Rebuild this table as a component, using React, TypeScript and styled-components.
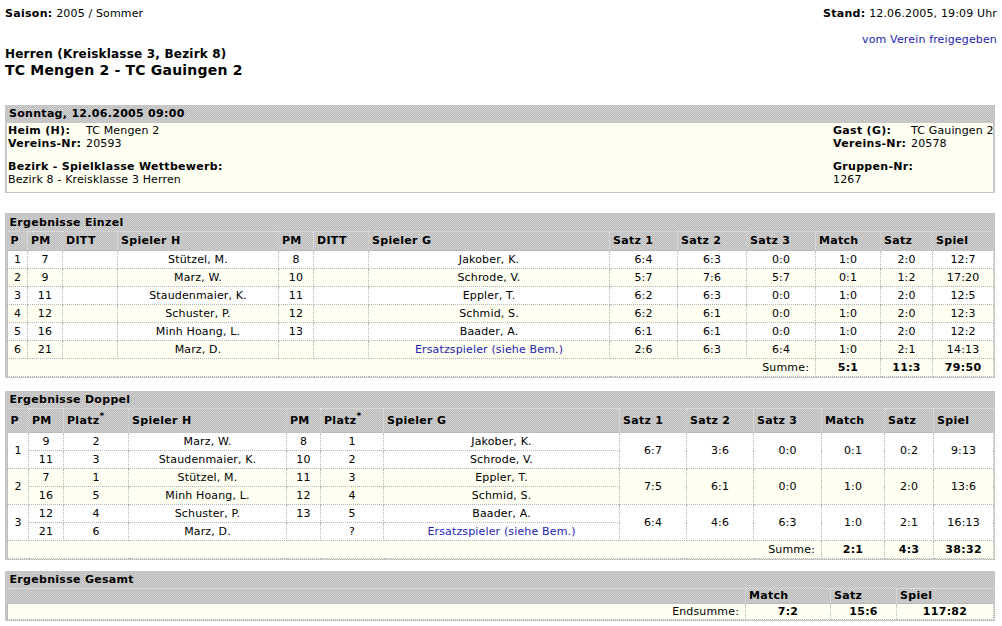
import React from "react";
import styled, { createGlobalStyle, css } from "styled-components";

const grayBg = css`
  background-color: #c6c6c6;
  background-image: repeating-conic-gradient(#bdbdbd 0% 25%, #d0d0d0 0% 50%);
  background-size: 2px 2px;
`;
const yellowBg = css`
  background-color: #fffff4;
  background-image: repeating-conic-gradient(#ffffe6 0% 25%, #ffffff 0% 50%);
  background-size: 2px 2px;
`;

const GlobalStyle = createGlobalStyle`
  html, body { margin: 0; padding: 0; background: #fff; }
  body {
    font-family: "DejaVu Sans", Verdana, "Liberation Sans", sans-serif;
    font-size: 11px;
    letter-spacing: 0.15px;
    color: #000;
  }
  b, th { letter-spacing: 0.3px; }
`;

const Page = styled.div`
  padding: 7px 5px 10px 5px;
`;

const TopBar = styled.div`
  display: flex;
  justify-content: space-between;
  line-height: 14px;
`;

const B = styled.b`
  font-weight: bold;
`;

const LinkRow = styled.div`
  margin-top: 12px;
  text-align: right;
  line-height: 14px;
  color: #2424b0;
`;

const League = styled.div`
  font-weight: bold;
  font-size: 12px;
  line-height: 15px;
  letter-spacing: 0.2px;
`;

const MatchTitle = styled.div`
  font-weight: bold;
  font-size: 14px;
  line-height: 17px;
  letter-spacing: 0.2px;
`;

const Box = styled.div<{ $mt: number }>`
  margin: ${(p) => p.$mt}px 2px 0 0;
  padding: 1px 2px 1px 2px;
  ${grayBg};
`;

const BoxHead = styled.div`
  font-weight: bold;
  letter-spacing: 0.3px;
  line-height: 16px;
  padding-left: 2px;
`;

const InfoBody = styled.div`
  ${yellowBg};
  display: grid;
  grid-template-columns: 825px 1fr;
  padding: 1px 0 6px 1px;
  margin-top: 1px;
  white-space: nowrap;
`;

const InfoCol = styled.div`
  display: flex;
  flex-direction: column;
`;

const FieldGrid = styled.div`
  display: grid;
  grid-template-columns: 78px auto;
  line-height: 13px;
`;

const Block = styled.div`
  margin-top: 10px;
  line-height: 13px;
`;

const Table = styled.table`
  width: 100%;
  border-collapse: collapse;
  table-layout: fixed;
  white-space: nowrap;
`;

const TitleCell = styled.th<{ $h: number }>`
  text-align: left;
  font-weight: bold;
  height: ${(p) => p.$h}px;
  padding: 0 2px;
  line-height: 14px;
  border-bottom: 1px dotted #e4e4e4;
`;

const HeadCell = styled.th<{ $h: number }>`
  text-align: left;
  font-weight: bold;
  height: ${(p) => p.$h}px;
  padding: 0 3px;
  line-height: 14px;
  border-left: 1px dotted #e0e0e0;
  &:first-child {
    border-left: none;
  }
`;

const Row = styled.tr<{ $alt: boolean }>`
  ${(p) => (p.$alt ? yellowBg : css`background: #fff;`)};
`;

const Cell = styled.td<{ $h?: number; $bold?: boolean; $link?: boolean }>`
  height: ${(p) => p.$h ?? 17}px;
  padding: 0 3px;
  line-height: 14px;
  text-align: center;
  font-weight: ${(p) => (p.$bold ? "bold" : "normal")};
  letter-spacing: ${(p) => (p.$bold ? "0.3px" : "0.15px")};
  color: ${(p) => (p.$link ? "#2424b0" : "#000")};
  border: 1px dotted #b4b4b4;
  overflow: visible;
`;

const SumLabel = styled(Cell)`
  text-align: right;
  padding-right: 6px;
`;

const Sup = styled.sup`
  font-size: 9px;
  line-height: 0;
`;

const einzelCols = [20, 35, 55, 161, 35, 55, 241, 68, 69, 69, 65, 52, 61];
const einzelHead = ["P", "PM", "DITT", "Spieler H", "PM", "DITT", "Spieler G", "Satz 1", "Satz 2", "Satz 3", "Match", "Satz", "Spiel"];
const einzelRows: (string | number)[][] = [
  [1, 7, "", "Stützel, M.", 8, "", "Jakober, K.", "6:4", "6:3", "0:0", "1:0", "2:0", "12:7"],
  [2, 9, "", "Marz, W.", 10, "", "Schrode, V.", "5:7", "7:6", "5:7", "0:1", "1:2", "17:20"],
  [3, 11, "", "Staudenmaier, K.", 11, "", "Eppler, T.", "6:2", "6:3", "0:0", "1:0", "2:0", "12:5"],
  [4, 12, "", "Schuster, P.", 12, "", "Schmid, S.", "6:2", "6:1", "0:0", "1:0", "2:0", "12:3"],
  [5, 16, "", "Minh Hoang, L.", 13, "", "Baader, A.", "6:1", "6:1", "0:0", "1:0", "2:0", "12:2"],
  [6, 21, "", "Marz, D.", "", "", "Ersatzspieler (siehe Bem.)", "2:6", "6:3", "6:4", "1:0", "2:1", "14:13"],
];

const doppelCols = [21, 35, 65, 158, 34, 63, 236, 67, 67, 68, 63, 49, 60];
const doppelHead: React.ReactNode[] = [
  "P", "PM", <>Platz<Sup>*</Sup></>, "Spieler H", "PM", <>Platz<Sup>*</Sup></>, "Spieler G",
  "Satz 1", "Satz 2", "Satz 3", "Match", "Satz", "Spiel",
];
const doppelGroups = [
  {
    p: 1,
    a: [9, 2, "Marz, W.", 8, 1, "Jakober, K."],
    b: [11, 3, "Staudenmaier, K.", 10, 2, "Schrode, V."],
    s: ["6:7", "3:6", "0:0", "0:1", "0:2", "9:13"],
  },
  {
    p: 2,
    a: [7, 1, "Stützel, M.", 11, 3, "Eppler, T."],
    b: [16, 5, "Minh Hoang, L.", 12, 4, "Schmid, S."],
    s: ["7:5", "6:1", "0:0", "1:0", "2:0", "13:6"],
  },
  {
    p: 3,
    a: [12, 4, "Schuster, P.", 13, 5, "Baader, A."],
    b: [21, 6, "Marz, D.", "", "?", "Ersatzspieler (siehe Bem.)"],
    s: ["6:4", "4:6", "6:3", "1:0", "2:1", "16:13"],
  },
];

const Cols = ({ widths }: { widths: number[] }) => (
  <colgroup>
    {widths.map((w, i) => (
      <col key={i} style={{ width: w }} />
    ))}
  </colgroup>
);

const isLink = (v: string | number) => v === "Ersatzspieler (siehe Bem.)";

const Einzel = () => (
  <Box $mt={20}>
    <Table>
      <Cols widths={einzelCols} />
      <thead>
        <tr>
          <TitleCell $h={17} colSpan={13}>Ergebnisse Einzel</TitleCell>
        </tr>
        <tr>
          {einzelHead.map((h, i) => (
            <HeadCell $h={18} key={i}>{h}</HeadCell>
          ))}
        </tr>
      </thead>
      <tbody>
        {einzelRows.map((r, i) => (
          <Row $alt={i % 2 === 1} key={i}>
            {r.map((v, j) => (
              <Cell key={j} $link={isLink(v)}>{v}</Cell>
            ))}
          </Row>
        ))}
        <Row $alt={true}>
          <SumLabel colSpan={10}>Summe:</SumLabel>
          <Cell $bold>5:1</Cell>
          <Cell $bold>11:3</Cell>
          <Cell $bold>79:50</Cell>
        </Row>
      </tbody>
    </Table>
  </Box>
);

const Doppel = () => (
  <Box $mt={13}>
    <Table>
      <Cols widths={doppelCols} />
      <thead>
        <tr>
          <TitleCell $h={16} colSpan={13}>Ergebnisse Doppel</TitleCell>
        </tr>
        <tr>
          {doppelHead.map((h, i) => (
            <HeadCell $h={23} key={i}>{h}</HeadCell>
          ))}
        </tr>
      </thead>
      <tbody>
        {doppelGroups.map((g, i) => (
          <React.Fragment key={i}>
            <Row $alt={i % 2 === 1}>
              <Cell rowSpan={2}>{g.p}</Cell>
              {g.a.map((v, j) => (
                <Cell key={j} $link={isLink(v)}>{v}</Cell>
              ))}
              {g.s.map((v, j) => (
                <Cell key={"s" + j} rowSpan={2}>{v}</Cell>
              ))}
            </Row>
            <Row $alt={i % 2 === 1}>
              {g.b.map((v, j) => (
                <Cell key={j} $link={isLink(v)}>{v}</Cell>
              ))}
            </Row>
          </React.Fragment>
        ))}
        <Row $alt={true}>
          <SumLabel colSpan={10}>Summe:</SumLabel>
          <Cell $bold>2:1</Cell>
          <Cell $bold>4:3</Cell>
          <Cell $bold>38:32</Cell>
        </Row>
      </tbody>
    </Table>
  </Box>
);

const Gesamt = () => (
  <Box $mt={11}>
    <Table>
      <Cols widths={[738, 85, 66, 97]} />
      <thead>
        <tr>
          <TitleCell $h={16} colSpan={4}>Ergebnisse Gesamt</TitleCell>
        </tr>
        <tr>
          <HeadCell $h={14}></HeadCell>
          <HeadCell $h={14}>Match</HeadCell>
          <HeadCell $h={14}>Satz</HeadCell>
          <HeadCell $h={14}>Spiel</HeadCell>
        </tr>
      </thead>
      <tbody>
        <Row $alt={true}>
          <SumLabel $h={15}>Endsumme:</SumLabel>
          <Cell $h={15} $bold>7:2</Cell>
          <Cell $h={15} $bold>15:6</Cell>
          <Cell $h={15} $bold>117:82</Cell>
        </Row>
      </tbody>
    </Table>
  </Box>
);

export default function App() {
  return (
    <>
      <GlobalStyle />
      <Page>
        <TopBar>
          <span>
            <B>Saison:</B> 2005 / Sommer
          </span>
          <span>
            <B>Stand:</B> 12.06.2005, 19:09 Uhr
          </span>
        </TopBar>
        <LinkRow>vom Verein freigegeben</LinkRow>
        <League>Herren (Kreisklasse 3, Bezirk 8)</League>
        <MatchTitle>TC Mengen 2 - TC Gauingen 2</MatchTitle>

        <Box $mt={26}>
          <BoxHead>Sonntag, 12.06.2005 09:00</BoxHead>
          <InfoBody>
            <InfoCol>
              <FieldGrid>
                <B>Heim (H):</B>
                <span>TC Mengen 2</span>
                <B>Vereins-Nr:</B>
                <span>20593</span>
              </FieldGrid>
              <Block>
                <B>Bezirk - Spielklasse Wettbewerb:</B>
                <div>Bezirk 8 - Kreisklasse 3 Herren</div>
              </Block>
            </InfoCol>
            <InfoCol>
              <FieldGrid>
                <B>Gast (G):</B>
                <span>TC Gauingen 2</span>
                <B>Vereins-Nr:</B>
                <span>20578</span>
              </FieldGrid>
              <Block>
                <B>Gruppen-Nr:</B>
                <div>1267</div>
              </Block>
            </InfoCol>
          </InfoBody>
        </Box>

        <Einzel />
        <Doppel />
        <Gesamt />
      </Page>
    </>
  );
}
